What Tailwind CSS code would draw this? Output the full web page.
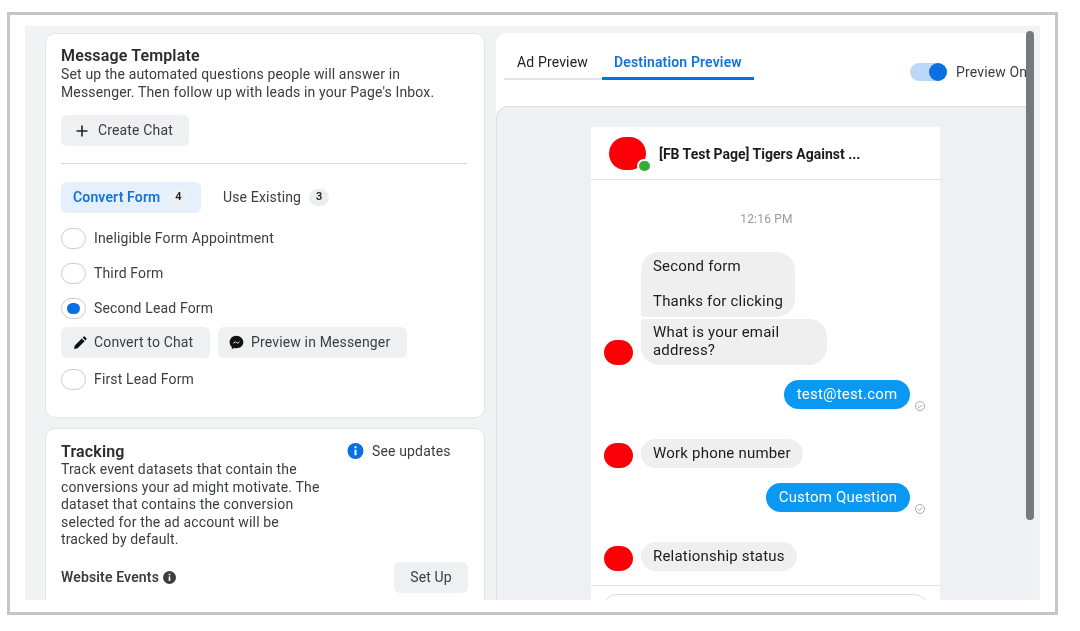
<!DOCTYPE html>
<html lang="en">
<head>
  <meta charset="UTF-8">
  <title>Message Template</title>
  <script src="https://cdn.jsdelivr.net/npm/@tailwindcss/browser@4"></script>
</head>
<body class="bg-white overflow-hidden font-['Roboto',sans-serif] text-[14px] tracking-[0.15px] text-[#3a3d42]">
  <div class="mt-[12px] ml-[7px] w-[1051px] h-[603px] border-[3px] border-[#c6c6c6] pt-[11px] pl-[15px]">
    <div class="relative w-[1015px] h-[574px] bg-[#f0f2f3] overflow-hidden flex gap-[11px] pl-[20px] pt-[7px] blur-[0.4px]">

      <!-- left column -->
      <div class="w-[440px] flex flex-col gap-[10px] shrink-0">
        <section class="h-[385px] shrink-0 bg-white rounded-[10px] border border-[#e4e6e8] pl-[15px] pr-[16px] pt-[13px]">
          <h2 class="text-[16px] leading-[18px] font-semibold text-[#2a2c30]">Message Template</h2>
          <p class="leading-[17.6px] mt-[1px]">Set up the automated questions people will answer in<br>Messenger. Then follow up with leads in your Page's Inbox.</p>
          <button class="mt-[14px] h-[31px] w-[128px] flex items-center bg-[#eff0f1] rounded-md pl-[14px]">
            <svg class="w-[14px] h-[14px]" viewBox="0 0 14 14"><path d="M7 1.500v11M1.500 7h11" stroke="#222" stroke-width="1.600"/></svg>
            <span class="ml-[9px]">Create Chat</span>
          </button>
          <hr class="mt-[17px] border-[#d9dbdd] w-[406px]">
          <div class="mt-[18px] flex items-center">
            <div class="w-[140px] h-[31px] bg-[#e5f0fc] rounded-md flex items-center pl-[12px]">
              <span class="font-semibold text-[#1472dc]">Convert Form</span>
              <span class="ml-[8px] w-[20px] h-[17px] rounded-full bg-[#eef1f4] text-[11px] font-semibold text-[#222] flex items-center justify-center">4</span>
            </div>
            <span class="ml-[22px]">Use Existing</span>
            <span class="ml-[8px] w-[20px] h-[17px] rounded-full bg-[#eceded] text-[11px] font-semibold text-[#222] flex items-center justify-center">3</span>
          </div>
          <div class="mt-[14px] flex items-center h-[22px]">
            <span class="w-[25px] h-[21px] rounded-full border border-[#c8cacc]"></span>
            <span class="ml-[8px]">Ineligible Form Appointment</span>
          </div>
          <div class="mt-[13px] flex items-center h-[22px]">
            <span class="w-[25px] h-[21px] rounded-full border border-[#c8cacc]"></span>
            <span class="ml-[8px]">Third Form</span>
          </div>
          <div class="mt-[13px] flex items-center h-[22px]">
            <span class="w-[25px] h-[21px] rounded-full border border-[#c8cacc] flex items-center justify-center">
              <span class="w-[13px] h-[11px] rounded-full bg-[#0a6fe0]"></span>
            </span>
            <span class="ml-[8px]">Second Lead Form</span>
          </div>
          <div class="mt-[8px] flex gap-[8px]">
            <button class="h-[31px] w-[149px] flex items-center bg-[#eff0f1] rounded-md pl-[12px]">
              <svg class="w-[14px] h-[14px]" viewBox="0 0 14 14"><path d="M1 13l.8-3.600 7-7 2.800 2.800-7 7zM9.600 1.600l.9-.9a1 1 0 0 1 1.400 0l1.400 1.400a1 1 0 0 1 0 1.400l-.9.9z" fill="#111"/></svg>
              <span class="ml-[7px]">Convert to Chat</span>
            </button>
            <button class="h-[31px] w-[189px] flex items-center bg-[#eff0f1] rounded-md pl-[11px]">
              <svg class="w-[15px] h-[15px]" viewBox="0 0 14 14"><path d="M7 .8C3.400.8.6 3.400.6 6.800c0 1.800.8 3.300 2 4.400v2l2-1.100c.7.2 1.500.3 2.400.3 3.600 0 6.400-2.600 6.400-5.600S10.600.8 7 .8z" fill="#111"/><path d="M3.300 8.500l2.300-2.700 1.900 1.400 2.900-1.700-2.300 2.700-1.900-1.400z" fill="#fff"/></svg>
              <span class="ml-[7px]">Preview in Messenger</span>
            </button>
          </div>
          <div class="mt-[10px] flex items-center h-[22px]">
            <span class="w-[25px] h-[21px] rounded-full border border-[#c8cacc]"></span>
            <span class="ml-[8px]">First Lead Form</span>
          </div>
        </section>

        <section class="h-[200px] shrink-0 bg-white rounded-t-[10px] border border-[#e4e6e8] pl-[15px] pr-[16px] pt-[14px]">
          <div class="flex items-start">
            <div class="w-[265px]">
              <h2 class="text-[16px] leading-[18px] font-semibold text-[#2a2c30]">Tracking</h2>
              <p class="leading-[17.6px]">Track event datasets that contain the conversions your ad might motivate. The dataset that contains the conversion selected for the ad account will be tracked by default.</p>
            </div>
            <div class="ml-[21px] -mt-[1px] flex items-center h-[18px]">
              <svg class="w-[17px] h-[16px]" viewBox="0 0 16 16"><circle cx="8" cy="8" r="8" fill="#0a6fe0"/><path d="M8 3.300v2M8 6.800v5.500" stroke="#fff" stroke-width="2"/></svg>
              <span class="ml-[8px]">See updates</span>
            </div>
          </div>
          <div class="mt-[13px] flex items-center justify-between">
            <div class="flex items-center">
              <span class="font-semibold">Website Events</span>
              <svg class="ml-[4px] w-[13px] h-[13px]" viewBox="0 0 16 16"><circle cx="8" cy="8" r="8" fill="#3a3d42"/><path d="M8 3.300v2M8 6.800v5.500" stroke="#fff" stroke-width="2"/></svg>
            </div>
            <button class="w-[74px] h-[31px] bg-[#eff0f1] rounded-md">Set Up</button>
          </div>
        </section>
      </div>

      <!-- right panel -->
      <section class="flex-1 bg-white rounded-t-[10px] flex flex-col min-w-0 mr-[6px]">
        <div class="h-[73px] flex shrink-0 pl-[8px] overflow-hidden">
          <div class="w-[98px] h-[47px] border-b-2 border-[#e3e4e6] flex items-center pl-[13px] pt-[14px] text-[#222] whitespace-nowrap">Ad Preview</div>
          <div class="w-[152px] h-[47px] border-b-[3px] border-[#0a6fe0] flex items-center pl-[12px] pt-[14px] font-semibold text-[#1472dc] whitespace-nowrap">Destination Preview</div>
          <div class="ml-[156px] mt-[30px] w-[37px] h-[18px] rounded-full bg-[#bcd7f7] flex justify-end shrink-0">
            <span class="w-[18px] h-[18px] rounded-full bg-[#0a6fe0]"></span>
          </div>
          <span class="ml-[9px] mt-[30px] leading-[18px] whitespace-nowrap">Preview On</span>
        </div>

        <div class="flex-1 bg-[#eef0f3] border-t border-l border-[#dcdee0] rounded-tl-[12px] pl-[94px] pt-[20px] overflow-hidden">
          <div class="w-[349px] h-[480px] bg-white text-[#1c1c1c] text-[15px] tracking-[0.2px]">
            <div class="h-[53px] border-b border-[#e2e3e5] flex items-center pl-[18px]">
              <div class="relative w-[37px] h-[33px] rounded-full bg-[#fb0006] shrink-0">
                <span class="absolute right-[-6px] bottom-[-3px] w-[15px] h-[14px] rounded-full bg-[#35ab3c] border-2 border-white"></span>
              </div>
              <span class="ml-[13px] mt-[2px] text-[14px] tracking-normal font-bold text-[#1c1c1c] whitespace-nowrap">[FB Test Page] Tigers Against ...</span>
            </div>
            <p class="mt-[31px] text-center text-[12px] leading-[16px] text-[#9a9a9a] pl-[2px]">12:16 PM</p>

            <div class="ml-[50px] mt-[25px] w-[154px] h-[65px] bg-[#efefef] rounded-[18px] rounded-bl-[4px] pl-[12px] pt-[6px] leading-[17.5px]">Second form<br><br>Thanks for clicking</div>
            <div class="mt-[2px] flex items-end pl-[13px]">
              <span class="w-[29px] h-[25px] rounded-full bg-[#fb0006] shrink-0"></span>
              <div class="ml-[8px] w-[186px] h-[46px] bg-[#efefef] rounded-[18px] rounded-tl-[4px] pl-[12px] pt-[5px] leading-[17.5px]">What is your email address?</div>
            </div>

            <div class="mt-[15px] flex justify-end items-end pr-[15px]">
              <div class="w-[126px] h-[29px] rounded-full bg-[#0a99f2] text-white flex items-center justify-center">test@test.com</div>
              <svg class="ml-[5px] mb-[-2px] w-[10px] h-[10px]" viewBox="0 0 10 10" fill="none" stroke="#a8a8a8"><circle cx="5" cy="5" r="4.500"/><path d="M2.800 5.100l1.600 1.500 2.800-3"/></svg>
            </div>

            <div class="mt-[30px] flex items-center pl-[13px]">
              <span class="w-[29px] h-[25px] rounded-full bg-[#fb0006] shrink-0 mt-[3px]"></span>
              <div class="ml-[8px] w-[162px] h-[29px] bg-[#efefef] rounded-full flex items-center pl-[12px]">Work phone number</div>
            </div>

            <div class="mt-[15px] flex justify-end items-end pr-[15px]">
              <div class="w-[144px] h-[29px] rounded-full bg-[#0a99f2] text-white flex items-center justify-center">Custom Question</div>
              <svg class="ml-[5px] mb-[-2px] w-[10px] h-[10px]" viewBox="0 0 10 10" fill="none" stroke="#a8a8a8"><circle cx="5" cy="5" r="4.500"/><path d="M2.800 5.100l1.600 1.500 2.800-3"/></svg>
            </div>

            <div class="mt-[30px] flex items-center pl-[13px]">
              <span class="w-[29px] h-[25px] rounded-full bg-[#fb0006] shrink-0 mt-[3px]"></span>
              <div class="ml-[8px] w-[156px] h-[29px] bg-[#efefef] rounded-full flex items-center pl-[12px]">Relationship status</div>
            </div>

            <div class="mt-[14px] border-t border-[#e2e3e5] pt-[8px] px-[11px]">
              <div class="h-[30px] border border-[#dcdcdc] rounded-full"></div>
            </div>
          </div>
        </div>
      </section>

      <!-- scrollbar sits over the panel -->
      <div class="absolute left-[1001px] top-[5px] w-[8px] h-[489px] rounded-full bg-[#77797c]"></div>
    </div>
  </div>
</body>
</html>
